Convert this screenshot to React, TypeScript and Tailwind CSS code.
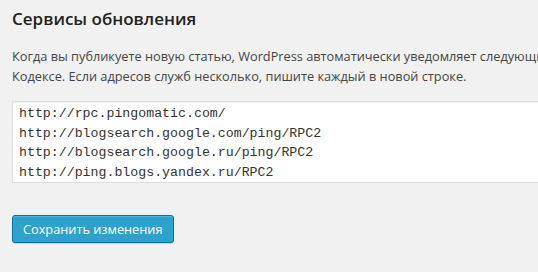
import React from 'react';

const services = [
  'http://rpc.pingomatic.com/',
  'http://blogsearch.google.com/ping/RPC2',
  'http://blogsearch.google.ru/ping/RPC2',
  'http://ping.blogs.yandex.ru/RPC2',
  'http://rpc.weblogs.com/RPC2',
];

export default function App() {
  return (
    <div className="w-full h-screen overflow-hidden bg-[#f1f1f1] px-3 font-['Open_Sans',sans-serif]">
      {/* Heading */}
      <h3 className="mt-[7px] text-[17px] leading-[24px] font-semibold text-[#222] whitespace-nowrap">
        Сервисы обновления
      </h3>

      {/* Description */}
      <p className="mt-[15px] text-[12.75px] leading-[20px] text-[#444] whitespace-nowrap">
        Когда вы публикуете новую статью, WordPress автоматически уведомляет следующие сайты служб
        обновления. Подробнее — на странице <a className="text-[#0074a2]">Update Services</a> в
        <br />
        Кодексе. Если адресов служб несколько, пишите каждый в новой строке.
      </p>

      {/* Services list */}
      <div className="mt-[15px] w-[620px] h-[82px] overflow-hidden bg-white border border-[#ddd] shadow-[inset_0_1px_2px_rgba(0,0,0,0.07)] px-[6px] pt-[2px]">
        {services.map((s) => (
          <div
            key={s}
            className="font-['Liberation_Mono',monospace] text-[13.25px] leading-[19.5px] text-[#333] whitespace-pre"
          >
            {s}
          </div>
        ))}
      </div>

      {/* Save */}
      <button className="mt-[32px] h-[28px] px-[10px] pb-px rounded-[3px] bg-[#2ea2cc] border border-[#0074a2] text-white text-[12.75px] leading-[26px] shadow-[inset_0_1px_0_rgba(120,200,230,0.5),0_1px_0_rgba(0,0,0,0.15)]">
        Сохранить изменения
      </button>
    </div>
  );
}
